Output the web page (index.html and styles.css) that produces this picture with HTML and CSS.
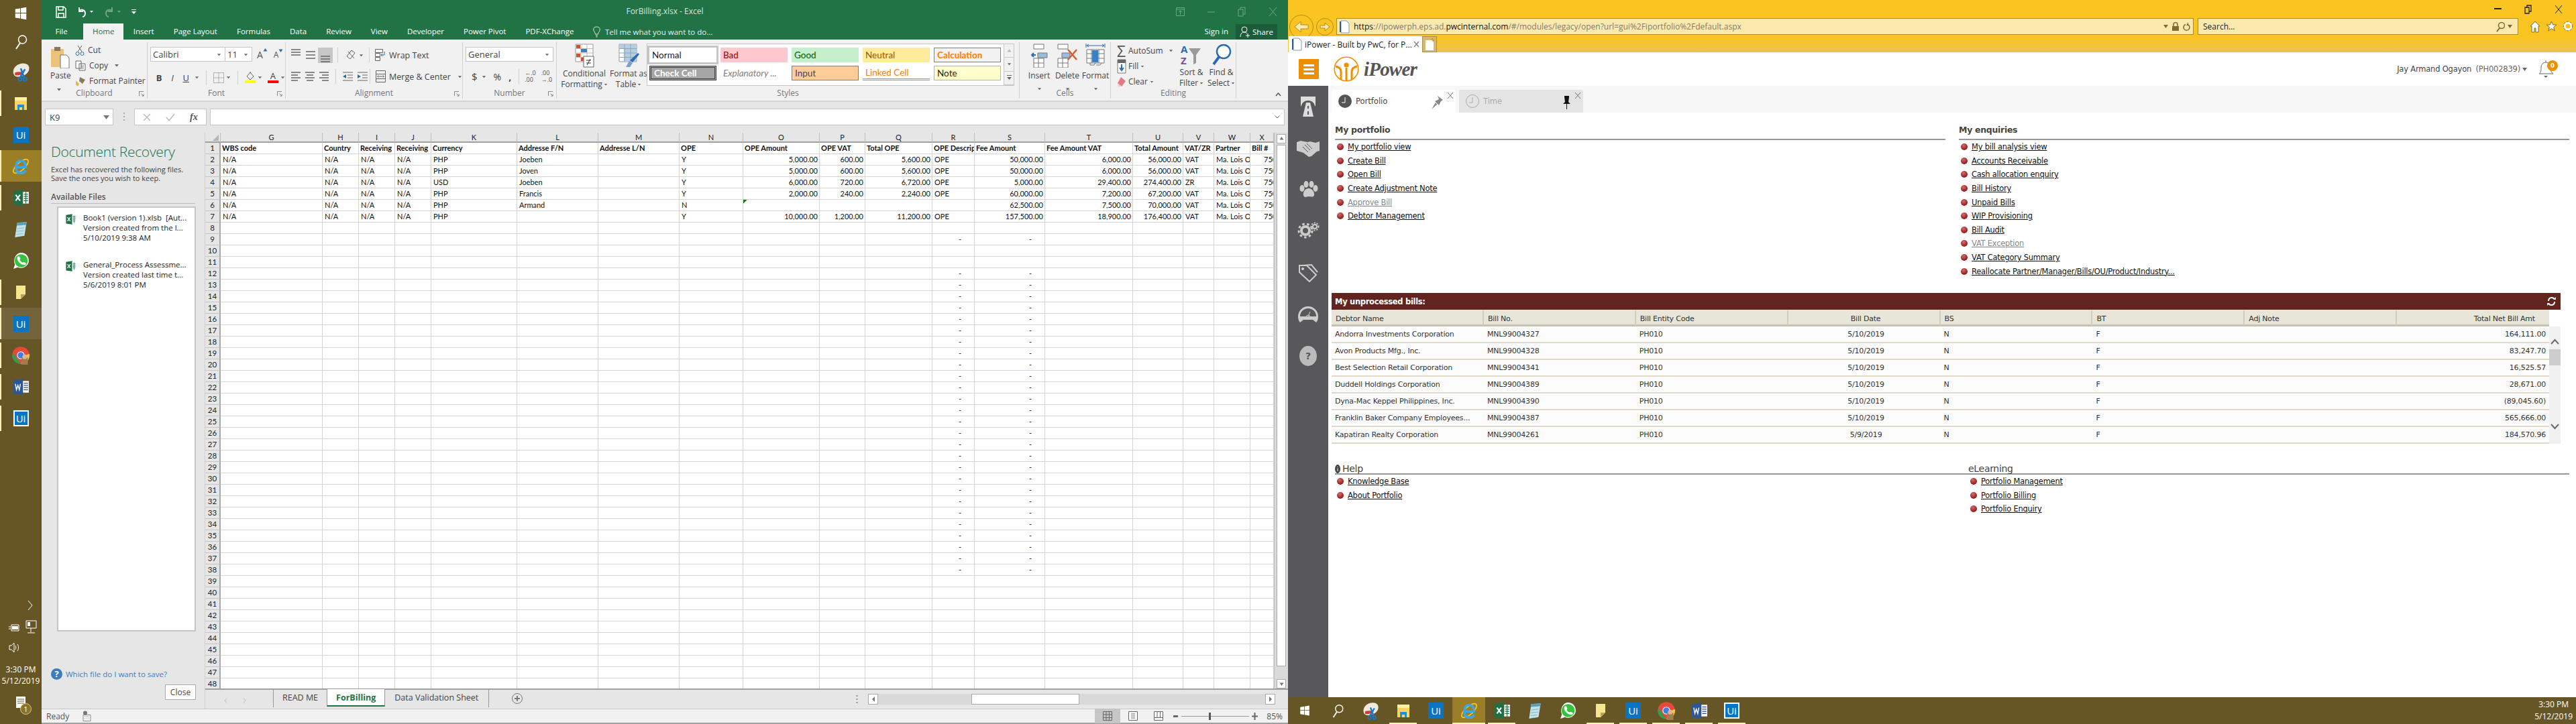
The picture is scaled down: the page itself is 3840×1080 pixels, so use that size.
FILE: index.html
```html
<!DOCTYPE html>
<html lang="en">
<head>
<meta charset="utf-8">
<title>ForBilling.xlsx - Excel and iPower</title>
<link rel="stylesheet" href="styles.css">
</head>
<body>
<svg class="sprite" width="0" height="0" aria-hidden="true">
<symbol id="win" viewBox="0 0 24 24"><path fill="#fff" d="M3 5l8-1.2V11H3zM12 3.600L21 2v9h-9zM3 12h8v8.200L3 19zM12 12h9v10l-9-1.600z"/></symbol>
<symbol id="find" viewBox="0 0 24 24"><circle cx="14.500" cy="9" r="6" fill="none" stroke="#fff" stroke-width="1.500"/><path d="M11 14L5 23" stroke="#fff" stroke-width="2"/></symbol>
<symbol id="snip" viewBox="0 0 24 24"><path fill="#efe9df" d="M3 12C3 6 9 2 15 2c5 0 7 3 7 6 0 6-7 10-13 10-4 0-6-2-6-6z"/><path fill="#cf3e37" d="M5 13c3-1 8-1 11 0-3 3-8 4-11 3z"/><path stroke="#1b78c9" stroke-width="2" fill="none" d="M12 8l4 11M17 9l-6 10"/><circle cx="11" cy="21" r="2" fill="none" stroke="#1b78c9" stroke-width="1.500"/><circle cx="17" cy="21" r="2" fill="none" stroke="#1b78c9" stroke-width="1.500"/></symbol>
<symbol id="folder" viewBox="0 0 24 24"><path fill="#fbd65e" d="M3 3h18v19H3z"/><path fill="#fdf0a6" d="M3 3h18v5H3z"/><path fill="#1f8fd6" d="M7 14h10v8h-3v-4h-4v4H7z"/></symbol>
<symbol id="xl" viewBox="0 0 24 24"><path fill="#1e7145" d="M2 3l13-2v22L2 21z"/><path fill="#fff" d="M15 4h8v16h-8z"/><path stroke="#1e7145" stroke-width="1" d="M16 7h6M16 10h6M16 13h6M16 16h6M19 4v16"/><path stroke="#fff" stroke-width="2" d="M5 8l6 8M11 8l-6 8"/></symbol>
<symbol id="ie" viewBox="0 0 24 24"><ellipse cx="12" cy="12" rx="12" ry="5" transform="rotate(-42 12 12)" fill="none" stroke="#f4c430" stroke-width="1.500"/><path d="M6 13h12c0-5-2-8-6-8s-6 3-6 8 2 8 6 8c3 0 5-1 6-4" fill="none" stroke="#3aa7e8" stroke-width="3"/></symbol>
<symbol id="pad" viewBox="0 0 24 24"><path fill="#bfe3e8" d="M7 3l13-1-3 19-13 2z"/><path fill="#5c9fb6" d="M7 3l13-1-.6 4L6.300 7z"/><path stroke="#8fbac8" stroke-width="1" d="M7 11l10-1M6 15l10-1M6 19l9-1"/></symbol>
<symbol id="wa" viewBox="0 0 24 24"><path fill="#fff" d="M2 23l2-6C1 11 5 1 12.500 1 19 1 23 6 23 12c0 7-8 12-15 9z"/><circle cx="12.500" cy="12" r="9" fill="#35c23f"/><path fill="#fff" d="M8 6l2 0 1.500 3-1 1.500c.7 1.800 2 3 4 4l1.500-1 3 1.500v2c-3 2-6 0-9-2.500C7.500 12 6 8.500 8 6z"/></symbol>
<symbol id="sticky" viewBox="0 0 24 24"><path fill="#f7e58f" d="M5 2h14v13l-7 7H5z"/><path fill="#b7a35a" d="M19 15l-7 7v-7z"/></symbol>
<symbol id="chrome" viewBox="0 0 24 24"><circle cx="12" cy="12" r="11" fill="#e8483b"/><path fill="#2f9e4f" d="M2 9l10 14c-6 0-11-5-11-11z"/><path fill="#f5c53a" d="M23 10a11 11 0 0 1-11 13l6-11z"/><circle cx="12" cy="12" r="5" fill="#fff"/><circle cx="12" cy="12" r="4" fill="#3f7fe0"/><path fill="#a37c4e" d="M13 15h8v9h-8z"/><circle cx="17" cy="14" r="3" fill="#e0b48c"/></symbol>
<symbol id="word" viewBox="0 0 24 24"><path fill="#2b579a" d="M2 3l13-2v22L2 21z"/><path fill="#fff" d="M15 4h8v16h-8z"/><path stroke="#2b579a" stroke-width="1" d="M16 7h6M16 10h6M16 13h6M16 16h6"/><path stroke="#fff" stroke-width="1.300" fill="none" d="M4.500 8l1.500 8 2-6 2 6 1.500-8"/></symbol>
<symbol id="dn" viewBox="0 0 8 5"><path fill="#666" d="M1 1h6L4 4.500z"/></symbol>
<symbol id="launch" viewBox="0 0 9 9"><path fill="none" stroke="#777" d="M.5 8V.5H8M4 4l4 4M8 5v3H5"/></symbol>
<symbol id="lines" viewBox="0 0 16 14"><path stroke="#666" stroke-width="1.300" d="M1 2h14M1 7h14M1 12h14"/></symbol>
<symbol id="linesl" viewBox="0 0 16 14"><path stroke="#666" stroke-width="1.300" d="M1 1h14M1 5h10M1 9h14M1 13h10"/></symbol>
<symbol id="linesc" viewBox="0 0 16 14"><path stroke="#666" stroke-width="1.300" d="M1 1h14M3 5h10M1 9h14M3 13h10"/></symbol>
<symbol id="linesr" viewBox="0 0 16 14"><path stroke="#666" stroke-width="1.300" d="M1 1h14M5 5h10M1 9h14M5 13h10"/></symbol>
<symbol id="page" viewBox="0 0 16 20"><path fill="#fff" stroke="#89a" d="M3 1h8l4 4v14H3z"/><path fill="#2b579a" d="M1 2h2v16H1z"/></symbol>
</svg>

<nav class="vbar">
  <div class="vitem v-win"><svg width="22" height="22"><use href="#win"/></svg></div>
  <div class="vitem v-find"><svg width="24" height="24"><use href="#find"/></svg></div>
  <div class="vitem v-slot"><svg width="30" height="30"><use href="#snip"/></svg></div>
  <div class="vitem v-slot on"><svg width="24" height="28"><use href="#folder"/></svg></div>
  <div class="vitem v-slot"><span class="ui">Ui</span></div>
  <div class="vitem v-slot on active"><svg width="28" height="30"><use href="#ie"/></svg></div>
  <div class="vitem v-slot on"><svg width="26" height="26"><use href="#xl"/></svg></div>
  <div class="vitem v-slot"><svg width="26" height="30"><use href="#pad"/></svg></div>
  <div class="vitem v-slot"><svg width="26" height="28"><use href="#wa"/></svg></div>
  <div class="vitem v-slot on"><svg width="24" height="28"><use href="#sticky"/></svg></div>
  <div class="vitem v-slot on hover"><span class="ui">Ui</span></div>
  <div class="vitem v-slot on"><svg width="28" height="30"><use href="#chrome"/></svg></div>
  <div class="vitem v-slot on"><svg width="26" height="26"><use href="#word"/></svg></div>
  <div class="vitem v-slot on"><span class="ui ui-w">Ui</span></div>
  <div class="vspace"></div>
  <div class="vchev"><svg width="9" height="16"><path d="M1 1l6 7-6 7" fill="none" stroke="#fff"/></svg></div>
  <div class="vtray">
    <svg width="17" height="18"><path fill="none" stroke="#fff" d="M5 5h11v9H5zM1 8h3M1 11h3"/><rect x="6" y="7" width="9" height="5" fill="#fff"/></svg>
    <svg width="17" height="22"><path fill="none" stroke="#fff" d="M1 1h15v11H1zM8 12v6M3 19h11"/><rect x="3" y="3" width="4" height="6" fill="#fff"/></svg>
  </div>
  <div class="vvol"><svg width="18" height="16"><path fill="none" stroke="#fff" d="M1 5h3l4-4v14l-4-4H1zM10 5c1 2 1 4 0 6M13 3c2 3 2 7 0 10"/></svg></div>
  <div class="vclock">3:30 PM<br>5/12/2019</div>
  <div class="vnote"><svg width="18" height="20"><path fill="#fff" d="M1 1h14v17H1z"/><path stroke="#66562a" d="M3 5h10M3 8h10M3 11h10"/></svg><span class="vbadge">1</span></div>
</nav>

<main class="excel">
  <header class="xtitle">
    <div class="qat">
      <svg width="16" height="18"><path fill="none" stroke="#fff" stroke-width="1.500" d="M1 1h11l3 3v13H1zM4 1v5h7V1M4 17v-6h8v6"/></svg>
      <svg width="16" height="16"><path fill="none" stroke="#fff" stroke-width="2" d="M4 1v6h6M4 6c4-3 9-1 9 4 0 3-2 5-4 5"/></svg>
      <svg class="cd" width="7" height="5"><path fill="#fff" d="M1 1h5L3.500 4z"/></svg>
      <svg width="16" height="16"><path fill="none" stroke="#6fa588" stroke-width="2" d="M12 1v6H6M12 6C8 3 3 5 3 10c0 3 2 5 4 5"/></svg>
      <svg class="cd" width="7" height="5"><path fill="#6fa588" d="M1 1h5L3.500 4z"/></svg>
      <svg width="7" height="8"><path fill="#fff" d="M0 0h7v1H0zM0 3h7L3.500 7z"/></svg>
    </div>
    <div class="xname">ForBilling.xlsx - Excel</div>
    <div class="xwin">
      <svg width="13" height="13"><path fill="none" stroke="#6fa588" d="M.5.500h12v12H.5zM.5 3h12M6.500 5v6M4 7l2.500-2L9 7"/></svg>
      <svg width="11" height="11"><path stroke="#6fa588" d="M0 6h11"/></svg>
      <svg width="12" height="15"><path fill="none" stroke="#6fa588" d="M1 4h7v10H1zM4 4V1h7v10H8"/></svg>
      <svg width="13" height="15"><path stroke="#6fa588" d="M1 1l11 13M12 1L1 14"/></svg>
    </div>
  </header>
  <div class="xtabs">
    <span class="xt first">File</span><span class="xt home">Home</span><span class="xt">Insert</span><span class="xt">Page Layout</span><span class="xt">Formulas</span><span class="xt">Data</span><span class="xt">Review</span><span class="xt">View</span><span class="xt">Developer</span><span class="xt">Power Pivot</span><span class="xt">PDF-XChange</span>
    <span class="xtell"><svg width="11" height="17"><path fill="none" stroke="#d7e8de" d="M5.500 1C2 1 .7 3 .7 5c0 3 2.300 3.500 2.800 7h4C8 8.500 10.300 8 10.300 5c0-2-1.300-4-4.800-4zM4 14h3M4.500 16h2"/></svg>Tell me what you want to do...</span>
    <span class="xsign">Sign in</span>
    <span class="xshare"><svg width="15" height="17"><circle cx="7" cy="5" r="4" fill="none" stroke="#fff"/><path fill="none" stroke="#fff" d="M1 16c0-4 2-7 6-7 2 0 3 1 4 2M9 14h6M12 11v6"/></svg>Share</span>
  </div>

  <section class="ribbon">
    <div class="grp g-clip">
      <div class="gb clip">
        <div class="paste">
          <svg width="30" height="34"><path fill="#e9c47a" d="M1 5h19v27H1z"/><path fill="#8a7a5c" d="M6 2h9v6H6z"/><path fill="#fff" stroke="#777" d="M15 14h9l4 4v16H15z"/></svg>
          <span>Paste</span>
          <svg class="pdn" width="8" height="5"><use href="#dn"/></svg>
        </div>
        <div class="clipcol">
          <div class="cr"><svg width="14" height="16"><path fill="none" stroke="#666" d="M4 1l6 9M10 1L4 10"/><circle cx="3.500" cy="13" r="2.500" fill="none" stroke="#2b6cb0"/><circle cx="10.500" cy="13" r="2.500" fill="none" stroke="#2b6cb0"/></svg><span>Cut</span></div>
          <div class="cr"><svg width="16" height="16"><path fill="#fff" stroke="#666" d="M1 1h8v11H1zM6 5h9v10H6z"/><path stroke="#888" d="M8 8h5M8 10h5M8 12h5"/></svg><span>Copy</span><svg class="ml8" width="8" height="5"><use href="#dn"/></svg></div>
          <div class="cr"><svg width="16" height="18"><path fill="#e9b44c" d="M1 8l5 5-2 4-3-3z"/><path fill="#8a7a5c" d="M7 3l8 4-4 6-5-4z"/></svg><span>Format Painter</span></div>
        </div>
      </div>
      <div class="gl">Clipboard<svg class="lau" width="8" height="8"><use href="#launch"/></svg></div>
    </div>
    <div class="grp g-font">
      <div class="gb">
        <div class="fr1">
          <div class="combo c-font"><span>Calibri</span><svg width="7" height="5"><use href="#dn"/></svg></div>
          <div class="combo c-size"><span>11</span><svg width="7" height="5"><use href="#dn"/></svg></div>
          <span class="bigA">A<svg width="7" height="5"><path fill="#2b6cb0" d="M.5 4.500L3.500 0l3 4.500z"/></svg></span>
          <span class="smA">A<svg width="7" height="5"><path fill="#2b6cb0" d="M.5.500L3.500 5l3-4.500z"/></svg></span>
        </div>
        <div class="fr2">
          <b class="fb">B</b><i class="fi">I</i><u class="fu">U</u><svg class="m1" width="7" height="5"><use href="#dn"/></svg>
          <span class="sep"></span>
          <svg width="16" height="16"><path fill="none" stroke="#777" stroke-dasharray="1 1" d="M.5.500h15v15H.5zM.5 8h15M8 .5v15"/></svg><svg class="m1" width="7" height="5"><use href="#dn"/></svg>
          <span class="sep"></span>
          <span class="swatch"><svg width="15" height="13"><path fill="none" stroke="#666" d="M3 7l5-6 5 6-5 5zM8 1V0"/></svg><em class="sw-y"></em></span><svg class="m1" width="7" height="5"><use href="#dn"/></svg>
          <span class="swatch sw2"><span class="swA">A</span><em class="sw-r"></em></span><svg class="m1" width="7" height="5"><use href="#dn"/></svg>
        </div>
      </div>
      <div class="gl">Font<svg class="lau" width="8" height="8"><use href="#launch"/></svg></div>
    </div>
    <div class="grp g-align">
      <div class="gb">
        <div class="ar ar1">
          <span class="ab top"><svg width="16" height="14"><path stroke="#666" stroke-width="1.300" d="M1 1h14M1 5h14M1 9h14"/></svg></span>
          <span class="ab"><svg width="16" height="14"><use href="#lines"/></svg></span>
          <span class="ab sel"><svg width="16" height="14"><path stroke="#666" stroke-width="1.300" d="M1 5h14M1 9h14M1 13h14"/></svg></span>
          <span class="vs"></span>
          <svg class="ori" width="18" height="18"><path fill="none" stroke="#666" d="M3 11l7-9 5 4-7 9zM5 4l9 10"/></svg><svg class="m1" width="7" height="5"><use href="#dn"/></svg>
          <span class="vs vs2"></span>
          <svg class="wr" width="16" height="18"><path fill="none" stroke="#666" d="M.5.500h11v5H.5zM.5 6.500h7v5h-7zM.5 12.500h7v5h-7z"/><path fill="none" stroke="#2b6cb0" d="M14 4v5h-4M11 7l-2 2 2 2"/></svg>
          <span class="tx">Wrap Text</span>
        </div>
        <div class="ar">
          <span class="ab"><svg width="16" height="14"><use href="#linesl"/></svg></span>
          <span class="ab"><svg width="16" height="14"><use href="#linesc"/></svg></span>
          <span class="ab"><svg width="16" height="14"><use href="#linesr"/></svg></span>
          <span class="vs"></span>
          <svg class="ind" width="16" height="15"><path stroke="#666" d="M1 1h15M8 5h8M8 9h8M1 13h15"/><path fill="#2b6cb0" d="M6 4v6L1 7z"/></svg>
          <svg class="ind2" width="16" height="15"><path stroke="#666" d="M1 1h15M8 5h8M8 9h8M1 13h15"/><path fill="#2b6cb0" d="M1 4v6l5-3z"/></svg>
          <span class="vs vs3"></span>
          <svg class="wr" width="15" height="18"><path fill="none" stroke="#666" d="M.5.500h14v17H.5zM.5 5.500h14M.5 12.500h14"/><path fill="none" stroke="#666" d="M3 9h9M4 7.500L2.500 9 4 10.500M11 7.500L12.500 9 11 10.500"/></svg>
          <span class="tx">Merge &amp; Center</span><svg class="ml12" width="7" height="5"><use href="#dn"/></svg>
        </div>
      </div>
      <div class="gl">Alignment<svg class="lau" width="8" height="8"><use href="#launch"/></svg></div>
    </div>
    <div class="grp g-num">
      <div class="gb">
        <div class="combo c-gen"><span>General</span><svg width="7" height="5"><use href="#dn"/></svg></div>
        <div class="nr">
          <span class="dol">$</span><svg width="7" height="5"><use href="#dn"/></svg>
          <span class="pct">%</span><span class="com">,</span>
          <span class="vs"></span>
          <span class="dec"><small>←.0</small><small>.00</small></span>
          <span class="dec"><small>.00</small><small>→.0</small></span>
        </div>
      </div>
      <div class="gl">Number<svg class="lau" width="8" height="8"><use href="#launch"/></svg></div>
    </div>
    <div class="grp g-styles">
      <div class="gb stylesb">
        <div class="big bcf">
          <svg width="30" height="36"><path fill="#fff" stroke="#999" d="M2 1h26v26H2z"/><path stroke="#bbb" d="M2 7.500h26M2 14h26M2 20.500h26M10 1v26M19 1v26"/><path fill="#d1502e" d="M3 2h6v5H3zM3 15h6v5H3zM10 21h9v5h-9z"/><path fill="#4a7db8" d="M10 8h9v5h-9z"/><path fill="#fff" stroke="#666" d="M14 19h15v16H14z"/><path stroke="#333" d="M18 25h7M18 29h7M24 23l-5 9"/></svg>
          <span>Conditional</span><span>Formatting<svg width="6" height="4"><use href="#dn"/></svg></span>
        </div>
        <div class="big bft">
          <svg width="32" height="36"><path fill="#fff" stroke="#999" d="M2 1h26v26H2z"/><path fill="#b7cbe4" d="M2 1h26v6H2zM9 7h19v20H9z"/><path stroke="#8aa" d="M2 7.500h26M2 14h26M2 20.500h26M10 1v26M19 1v26"/><path fill="#2b6cb0" d="M30 14l2 2-10 12-4-3z"/><path fill="#7aa0d0" d="M17 26l5 3-4 6-6 0z"/></svg>
          <span>Format as</span><span>Table<svg width="6" height="4"><use href="#dn"/></svg></span>
        </div>
        <div class="gal">
          <div class="galgrid">
            <span class="st st-n">Normal</span><span class="st st-b">Bad</span><span class="st st-g">Good</span><span class="st st-u">Neutral</span><span class="st st-c">Calculation</span>
            <span class="st st-k">Check Cell</span><span class="st st-e">Explanatory ...</span><span class="st st-i">Input</span><span class="st st-l">Linked Cell</span><span class="st st-o">Note</span>
          </div>
          <div class="galbtns"><span><svg width="7" height="5"><path fill="#bbb" d="M.5 4.500L3.500 0l3 4.500z"/></svg></span><span><svg width="7" height="5"><use href="#dn"/></svg></span><span><svg width="7" height="8"><path fill="#666" d="M0 0h7v1H0zM0 3h7L3.500 7z"/></svg></span></div>
        </div>
      </div>
      <div class="gl">Styles</div>
    </div>
    <div class="grp g-cells">
      <div class="gb cellsb">
        <div class="cb"><svg width="28" height="36"><path fill="#fff" stroke="#777" d="M6 1h15v7H6zM6 22h15v14H6zM13 22v14M6 29h15"/><path fill="#9cbcde" stroke="#777" d="M12 14h14v7H12z"/><path fill="none" stroke="#2b6cb0" stroke-width="2" d="M9 17H3M6 14l-3 3 3 3"/></svg><span>Insert</span><svg width="7" height="5"><use href="#dn"/></svg></div>
        <div class="cb"><svg width="32" height="36"><path fill="#fff" stroke="#777" d="M2 1h15v7H2zM2 22h15v14H2zM9 22v14M2 29h15"/><path fill="#9cbcde" stroke="#777" d="M8 14h12v7H8z"/><path stroke="#e2572b" stroke-width="2.500" d="M17 9l13 15M30 9L17 24"/></svg><span>Delete</span><svg width="7" height="5"><use href="#dn"/></svg></div>
        <div class="cb"><svg width="30" height="36"><path fill="none" stroke="#2b6cb0" d="M2 3h26M2 3l3-2M2 3l3 2M28 3l-3-2M28 3l-3 2M1 0v6M29 0v6"/><path fill="#fff" stroke="#777" d="M2 9h26v20H2zM2 15h26M2 22h26M9 9v20M20 9v20"/><path fill="#3b7fc4" d="M10 10h9v18H10z"/><path fill="none" stroke="#777" d="M7 29v3h6l2-3M16 32h6l2-3"/></svg><span>Format</span><svg width="7" height="5"><use href="#dn"/></svg></div>
      </div>
      <div class="gl">Cells</div>
    </div>
    <div class="grp g-edit">
      <div class="gb editb">
        <div class="edcol">
          <div class="er"><span class="sig">Σ</span><span>AutoSum</span><svg class="ml5" width="7" height="5"><use href="#dn"/></svg></div>
          <div class="er"><svg width="14" height="22"><path fill="#fff" stroke="#777" d="M1 1h12v20H1z"/><path fill="#666" d="M1 1h12v5H1z"/><path stroke="#2b6cb0" stroke-width="2" fill="none" d="M7 8v9M4 13l3 4 3-4"/></svg><span>Fill</span><svg class="ml2" width="6" height="4"><use href="#dn"/></svg></div>
          <div class="er"><svg width="14" height="18"><path fill="#e37a8a" d="M6 2l7 6-6 8-6-5z"/><path fill="#f6c5cc" d="M1 11l6 5H2z"/></svg><span>Clear</span><svg class="ml2" width="6" height="4"><use href="#dn"/></svg></div>
        </div>
        <div class="big bsort"><svg width="32" height="34"><text x="0" y="14" class="az az1">A</text><text x="0" y="31" class="az az2">Z</text><path fill="#9a9a9a" d="M12 7h18l-7 10v12l-4 2V17z"/></svg><span>Sort &amp;</span><span>Filter<svg width="6" height="4"><use href="#dn"/></svg></span></div>
        <div class="big bfind"><svg width="30" height="34"><circle cx="18" cy="12" r="10" fill="#fff" stroke="#2b6cb0" stroke-width="2.500"/><path stroke="#2b6cb0" stroke-width="4" d="M11 20L3 31"/></svg><span>Find &amp;</span><span>Select<svg width="6" height="4"><use href="#dn"/></svg></span></div>
      </div>
      <div class="gl">Editing</div>
    </div>
    <div class="rcollapse"><svg width="9" height="6"><path fill="none" stroke="#555" stroke-width="1.500" d="M1 5l3.500-4L8 5"/></svg></div>
  </section>

  <div class="fbar">
    <div class="namebox"><span>K9</span><svg width="9" height="6"><path fill="#777" d="M0 0h9L4.500 6z"/></svg></div>
    <div class="dots"></div>
    <div class="fxbox">
      <svg width="12" height="12"><path stroke="#bbb" stroke-width="1.500" d="M1 1l10 10M11 1L1 11"/></svg>
      <svg width="14" height="12"><path fill="none" stroke="#bbb" stroke-width="1.500" d="M1 6l4 5L13 1"/></svg>
      <span class="fx">fx</span>
    </div>
    <div class="finput"><svg width="8" height="5"><path fill="none" stroke="#666" d="M.5.500L4 4l3.500-3.500"/></svg></div>
  </div>

  <div class="xbody">
    <aside class="recover">
      <h2>Document Recovery</h2>
      <p>Excel has recovered the following files.<br>Save the ones you wish to keep.</p>
      <h3>Available Files</h3>
      <div class="files">
        <div class="file"><svg width="17" height="20"><use href="#xl"/></svg><div>Book1 (version 1).xlsb&nbsp; [Aut...<br>Version created from the l...<br>5/10/2019 9:38 AM</div></div>
        <div class="file"><svg width="17" height="20"><use href="#xl"/></svg><div>General_Process Assessme...<br>Version created last time t...<br>5/6/2019 8:01 PM</div></div>
      </div>
      <a class="which"><svg width="17" height="17"><circle cx="8.500" cy="8.500" r="8.500" fill="#3f7cbf"/><text x="8.500" y="13" class="qm">?</text></svg>Which file do I want to save?</a>
      <div class="closewrap"><span class="closebtn">Close</span></div>
    </aside>
    <div class="sheetcol">
      <div class="sheetmain">
        <div class="gridwrap">
          <table class="grid">
            <colgroup><col class="c-rh"><col class="c-g"><col class="c-h"><col class="c-i"><col class="c-j"><col class="c-k"><col class="c-l"><col class="c-m"><col class="c-n"><col class="c-o"><col class="c-p"><col class="c-q"><col class="c-r"><col class="c-s"><col class="c-t"><col class="c-u"><col class="c-v"><col class="c-w"><col class="c-x"></colgroup>
            <thead><tr class="colh"><th class="corner"><svg width="9" height="9"><path fill="#b5b5b5" d="M9 0v9H0z"/></svg><th>G<th>H<th>I<th>J<th>K<th>L<th>M<th>N<th>O<th>P<th>Q<th>R<th>S<th>T<th>U<th>V<th>W<th>X</thead>
            <tbody>
            <tr class="r1"><th>1<td class="h">WBS code<td class="h">Country<td class="h">Receiving<td class="h">Receiving<td class="h">Currency<td class="h">Addresse F/N<td class="h">Addresse L/N<td class="h">OPE<td class="h">OPE Amount<td class="h">OPE VAT<td class="h">Total OPE<td class="h">OPE Descrip<td class="h">Fee Amount<td class="h">Fee Amount VAT<td class="h">Total Amount<td class="h">VAT/ZR<td class="h">Partner<td class="h">Bill #
            <tr><th>2<td>N/A<td>N/A<td>N/A<td>N/A<td>PHP<td>Joeben<td><td>Y<td class="n">5,000.00<td class="n">600.00<td class="n">5,600.00<td>OPE<td class="n">50,000.00<td class="n">6,000.00<td class="n">56,000.00<td>VAT<td>Ma. Lois Ong<td class="bn">7500
            <tr><th>3<td>N/A<td>N/A<td>N/A<td>N/A<td>PHP<td>Joven<td><td>Y<td class="n">5,000.00<td class="n">600.00<td class="n">5,600.00<td>OPE<td class="n">50,000.00<td class="n">6,000.00<td class="n">56,000.00<td>VAT<td>Ma. Lois Ong<td class="bn">7500
            <tr><th>4<td>N/A<td>N/A<td>N/A<td>N/A<td>USD<td>Joeben<td><td>Y<td class="n">6,000.00<td class="n">720.00<td class="n">6,720.00<td>OPE<td class="n">5,000.00<td class="n">29,400.00<td class="n">274,400.00<td>ZR<td>Ma. Lois Ong<td class="bn">7500
            <tr><th>5<td>N/A<td>N/A<td>N/A<td>N/A<td>PHP<td>Francis<td><td>Y<td class="n">2,000.00<td class="n">240.00<td class="n">2,240.00<td>OPE<td class="n">60,000.00<td class="n">7,200.00<td class="n">67,200.00<td>VAT<td>Ma. Lois Ong<td class="bn">7500
            <tr><th>6<td>N/A<td>N/A<td>N/A<td>N/A<td>PHP<td>Armand<td><td>N<td class="tri"><td><td><td><td class="n">62,500.00<td class="n">7,500.00<td class="n">70,000.00<td>VAT<td>Ma. Lois Ong<td class="bn">7500
            <tr><th>7<td>N/A<td>N/A<td>N/A<td>N/A<td>PHP<td><td><td>Y<td class="n">10,000.00<td class="n">1,200.00<td class="n">11,200.00<td>OPE<td class="n">157,500.00<td class="n">18,900.00<td class="n">176,400.00<td>VAT<td>Ma. Lois Ong<td class="bn">7500
            <tr><th>8<td><td><td><td><td><td><td><td><td><td><td><td><td><td><td><td><td><td>
            <tr><th>9<td><td><td><td><td><td><td><td><td><td><td><td class="d">-<td class="d">-<td><td><td><td><td>
            <tr><th>10<td><td><td><td><td><td><td><td><td><td><td><td><td><td><td><td><td><td>
            <tr><th>11<td><td><td><td><td><td><td><td><td><td><td><td><td><td><td><td><td><td>
            <tr><th>12<td><td><td><td><td><td><td><td><td><td><td><td class="d">-<td class="d">-<td><td><td><td><td>
            <tr><th>13<td><td><td><td><td><td><td><td><td><td><td><td class="d">-<td class="d">-<td><td><td><td><td>
            <tr><th>14<td><td><td><td><td><td><td><td><td><td><td><td class="d">-<td class="d">-<td><td><td><td><td>
            <tr><th>15<td><td><td><td><td><td><td><td><td><td><td><td class="d">-<td class="d">-<td><td><td><td><td>
            <tr><th>16<td><td><td><td><td><td><td><td><td><td><td><td class="d">-<td class="d">-<td><td><td><td><td>
            <tr><th>17<td><td><td><td><td><td><td><td><td><td><td><td class="d">-<td class="d">-<td><td><td><td><td>
            <tr><th>18<td><td><td><td><td><td><td><td><td><td><td><td class="d">-<td class="d">-<td><td><td><td><td>
            <tr><th>19<td><td><td><td><td><td><td><td><td><td><td><td class="d">-<td class="d">-<td><td><td><td><td>
            <tr><th>20<td><td><td><td><td><td><td><td><td><td><td><td class="d">-<td class="d">-<td><td><td><td><td>
            <tr><th>21<td><td><td><td><td><td><td><td><td><td><td><td class="d">-<td class="d">-<td><td><td><td><td>
            <tr><th>22<td><td><td><td><td><td><td><td><td><td><td><td class="d">-<td class="d">-<td><td><td><td><td>
            <tr><th>23<td><td><td><td><td><td><td><td><td><td><td><td class="d">-<td class="d">-<td><td><td><td><td>
            <tr><th>24<td><td><td><td><td><td><td><td><td><td><td><td class="d">-<td class="d">-<td><td><td><td><td>
            <tr><th>25<td><td><td><td><td><td><td><td><td><td><td><td class="d">-<td class="d">-<td><td><td><td><td>
            <tr><th>26<td><td><td><td><td><td><td><td><td><td><td><td class="d">-<td class="d">-<td><td><td><td><td>
            <tr><th>27<td><td><td><td><td><td><td><td><td><td><td><td class="d">-<td class="d">-<td><td><td><td><td>
            <tr><th>28<td><td><td><td><td><td><td><td><td><td><td><td class="d">-<td class="d">-<td><td><td><td><td>
            <tr><th>29<td><td><td><td><td><td><td><td><td><td><td><td class="d">-<td class="d">-<td><td><td><td><td>
            <tr><th>30<td><td><td><td><td><td><td><td><td><td><td><td class="d">-<td class="d">-<td><td><td><td><td>
            <tr><th>31<td><td><td><td><td><td><td><td><td><td><td><td class="d">-<td class="d">-<td><td><td><td><td>
            <tr><th>32<td><td><td><td><td><td><td><td><td><td><td><td class="d">-<td class="d">-<td><td><td><td><td>
            <tr><th>33<td><td><td><td><td><td><td><td><td><td><td><td class="d">-<td class="d">-<td><td><td><td><td>
            <tr><th>34<td><td><td><td><td><td><td><td><td><td><td><td class="d">-<td class="d">-<td><td><td><td><td>
            <tr><th>35<td><td><td><td><td><td><td><td><td><td><td><td class="d">-<td class="d">-<td><td><td><td><td>
            <tr><th>36<td><td><td><td><td><td><td><td><td><td><td><td class="d">-<td class="d">-<td><td><td><td><td>
            <tr><th>37<td><td><td><td><td><td><td><td><td><td><td><td class="d">-<td class="d">-<td><td><td><td><td>
            <tr><th>38<td><td><td><td><td><td><td><td><td><td><td><td class="d">-<td class="d">-<td><td><td><td><td>
            <tr><th>39<td><td><td><td><td><td><td><td><td><td><td><td><td><td><td><td><td><td>
            <tr><th>40<td><td><td><td><td><td><td><td><td><td><td><td><td><td><td><td><td><td>
            <tr><th>41<td><td><td><td><td><td><td><td><td><td><td><td><td><td><td><td><td><td>
            <tr><th>42<td><td><td><td><td><td><td><td><td><td><td><td><td><td><td><td><td><td>
            <tr><th>43<td><td><td><td><td><td><td><td><td><td><td><td><td><td><td><td><td><td>
            <tr><th>44<td><td><td><td><td><td><td><td><td><td><td><td><td><td><td><td><td><td>
            <tr><th>45<td><td><td><td><td><td><td><td><td><td><td><td><td><td><td><td><td><td>
            <tr><th>46<td><td><td><td><td><td><td><td><td><td><td><td><td><td><td><td><td><td>
            <tr><th>47<td><td><td><td><td><td><td><td><td><td><td><td><td><td><td><td><td><td>
            <tr><th>48<td><td><td><td><td><td><td><td><td><td><td><td><td><td><td><td><td><td>
            </tbody>
          </table>
        </div>
        <div class="vscroll">
          <span class="sbtn"><svg width="7" height="5"><path fill="#777" d="M.5 4.500L3.500 0l3 4.500z"/></svg></span>
          <span class="sthumb"></span>
          <span class="sbtn"><svg width="7" height="5"><path fill="#777" d="M.5.500L3.500 5l3-4.500z"/></svg></span>
        </div>
      </div>
      <div class="sheettabs">
        <div class="tnav"><svg width="5" height="8"><path fill="none" stroke="#bbb" d="M4 .5L1 4l3 3.500"/></svg><svg width="5" height="8"><path fill="none" stroke="#bbb" d="M1 .5L4 4 1 7.500"/></svg></div>
        <span class="stab">READ ME</span><span class="stab active">ForBilling</span><span class="stab last">Data Validation Sheet</span>
        <svg class="addsheet" width="16" height="16"><circle cx="8" cy="8" r="7.500" fill="none" stroke="#777"/><path stroke="#777" stroke-width="2" d="M4 8h8M8 4v8"/></svg>
        <div class="hdots"></div>
        <div class="hscroll"><span class="hb"><svg width="4" height="8"><path fill="#777" d="M4 0v8L0 4z"/></svg></span><span class="hspace1"></span><span class="hthumb"></span><span class="hspace2"></span><span class="hb"><svg width="4" height="8"><path fill="#777" d="M0 0v8l4-4z"/></svg></span></div>
      </div>
    </div>
  </div>
  <footer class="xstatus">
    <span class="ready">Ready</span>
    <svg width="13" height="16"><circle cx="4" cy="3.500" r="3" fill="#777"/><path fill="#fff" stroke="#888" d="M1 6.500h11v9H1z"/><path stroke="#888" stroke-dasharray="1.500 1.500" d="M3 9h7M3 12h7"/></svg>
    <div class="zoomarea">
      <span class="vbtn sel"><svg width="14" height="14"><path fill="none" stroke="#666" d="M.5.500h13v13H.5zM5 .5v13M9.500.500v13M.5 5h13M.5 9.500h13"/></svg></span>
      <span class="vbtn"><svg width="14" height="14"><path fill="#fff" stroke="#666" d="M.5.500h13v13H.5z"/><path stroke="#666" d="M4 4h6M4 7h6M4 10h6"/></svg></span>
      <span class="vbtn"><svg width="14" height="14"><path fill="#fff" stroke="#666" d="M.5.500h13v13H.5z"/><path stroke="#666" d="M.5 9.500h13M5 .5v9M9.500.500v9"/></svg></span>
      <svg class="zm" width="7" height="3"><path fill="#666" d="M0 0h7v3H0z"/></svg>
      <span class="slider"><em></em></span>
      <svg class="zp" width="9" height="11"><path stroke="#666" stroke-width="2" d="M0 5.500h9M4.500 0v11"/></svg>
      <span class="pctz">85%</span>
    </div>
  </footer>
</main>

<div class="browser">
  <header class="iechrome">
    <div class="ietitle">
      <svg width="11" height="3"><path stroke="#222" stroke-width="2" d="M0 1h11"/></svg>
      <svg width="11" height="14"><path fill="none" stroke="#222" stroke-width="1.300" d="M1 4h6v9H1zM4 4V1h6v9H7"/></svg>
      <svg width="12" height="14"><path stroke="#222" d="M1 1l10 12M11 1L1 13"/></svg>
    </div>
    <div class="ieaddr">
      <div class="navbtn back"><svg width="22" height="18"><path fill="#fde9ad" stroke="#b38a1b" d="M10 1L1 9l9 8v-5h11V6H10z"/></svg></div>
      <div class="navbtn fwd"><svg width="16" height="14"><path fill="#fde9ad" stroke="#b38a1b" d="M8 1l7 6-7 6V9H1V5h7z"/></svg></div>
      <div class="addr">
        <svg width="16" height="20"><use href="#page"/></svg>
        <span class="url"><b>https</b>://ipowerph.eps.ad.<b>pwcinternal.com</b>/#/modules/legacy/open?url=gui%2Fiportfolio%2Fdefault.aspx</span>
        <svg class="adn" width="7" height="5"><path fill="#7d6b32" d="M0 0h7L3.500 5z"/></svg>
        <svg width="10" height="13"><path fill="#7d6b32" d="M0 6h10v7H0z"/><path fill="none" stroke="#7d6b32" stroke-width="1.500" d="M2 6V3.500a3 3 0 0 1 6 0V6"/></svg>
        <svg width="11" height="14"><path fill="none" stroke="#7d6b32" stroke-width="1.500" d="M7 3.500a4.500 4.500 0 1 1-3 0"/><path fill="#7d6b32" d="M8 0v5H5z"/></svg>
      </div>
      <div class="search"><span>Search...</span><svg width="13" height="16"><circle cx="8" cy="6" r="4.500" fill="none" stroke="#7d6b32" stroke-width="1.500"/><path stroke="#7d6b32" stroke-width="2" d="M5 10l-4 5"/></svg><svg class="adn" width="7" height="5"><path fill="#7d6b32" d="M0 0h7L3.500 5z"/></svg></div>
      <div class="ietools">
        <svg width="16" height="18"><path fill="#fff" stroke="#7d6b32" d="M8 1L1 8h2v9h4v-6h2v6h4V8h2z"/></svg>
        <svg width="17" height="16"><path fill="#fff" stroke="#7d6b32" d="M8.500 1l2.200 5h5.300l-4.300 3.500 1.600 5.500-4.800-3.200L3.700 15l1.600-5.500L1 6h5.300z"/></svg>
        <svg width="16" height="16"><circle cx="8" cy="8" r="5" fill="none" stroke="#fff" stroke-width="3"/><circle cx="8" cy="8" r="6.800" fill="none" stroke="#7d6b32" stroke-dasharray="2.500 2.500"/></svg>
      </div>
    </div>
    <div class="ietabs">
      <div class="ietab"><svg width="16" height="20"><use href="#page"/></svg><span>iPower - Built by PwC, for P...</span><svg width="9" height="10"><path stroke="#888" stroke-width="1.500" d="M1 1l7 8M8 1L1 9"/></svg></div>
      <div class="ienew"><svg width="14" height="18"><path fill="#fff" d="M1 3h9l3 3v12H1z"/><path fill="#e88a0c" d="M10 0h2v2h-2zM12 2h2v2h-2z"/></svg></div>
    </div>
  </header>
  <div class="apphead">
    <span class="burger"><i></i><i></i><i></i></span>
    <svg class="logo" width="38" height="38" viewBox="0 0 38 38"><circle cx="19" cy="19" r="17.800" fill="#fff" stroke="#ef8f00" stroke-width="1.600"/><circle cx="19" cy="13" r="3.600" fill="#ef8f00"/><path fill="none" stroke="#ef8f00" stroke-width="3" d="M3 15c5 1 8 3 8 8v12M35 15c-5 1-8 3-8 8v12M19 17v20"/></svg>
    <span class="brand">iPower</span>
    <span class="user">Jay Armand Ogayon <span>(PH002839)</span><svg width="7" height="5"><path fill="#666" d="M0 0h7L3.500 5z"/></svg></span>
    <span class="bell"><svg width="24" height="28"><path fill="#fff" stroke="#666" d="M1 21c3-2 3-5 3-9 0-5 3-8 7-8s7 3 7 8c0 4 1 7 4 9zM11 4V1"/><path fill="#666" d="M8 24h6l-3 3z"/></svg><em>0</em></span>
  </div>
  <div class="appbody">
    <aside class="side">
      <div class="sitem"><svg width="24" height="30"><path fill="#ddd" d="M1 0h22v13l-1 2c0-5-4-9-10-9S2 10 2 15l-1-2z"/><path fill="#ddd" d="M9 9h6l5 21H4z"/><path stroke="#58585a" stroke-width="2" d="M12 14v4M12 22v5"/></svg></div>
      <div class="sitem"><svg width="34" height="26"><path fill="#ccc" d="M0 4l6-2 10 2 4-1 8 2 6-2v14l-4 1-8 7-4 1-8-6-6-2-4-1z"/><path stroke="#58585a" d="M12 8l8 8M9 11l8 8M15 6l8 8"/></svg></div>
      <div class="sitem"><svg width="30" height="28"><g fill="#ccc"><ellipse cx="6" cy="12" rx="3.500" ry="5"/><ellipse cx="12" cy="6" rx="3.500" ry="5"/><ellipse cx="20" cy="6" rx="3.500" ry="5"/><ellipse cx="26" cy="12" rx="3.500" ry="5"/><path d="M16 12c5 0 9 6 8 10s-5 2-8 2-7 3-8-2 3-10 8-10z"/></g></svg></div>
      <div class="sitem"><svg width="34" height="30"><g fill="none" stroke="#ccc"><circle cx="13" cy="14" r="6" stroke-width="4"/><circle cx="13" cy="14" r="10" stroke-width="3" stroke-dasharray="3.500 3.500"/><circle cx="27" cy="8" r="3" stroke-width="2"/><circle cx="27" cy="8" r="5.500" stroke-width="2" stroke-dasharray="2 2"/></g></svg></div>
      <div class="sitem"><svg width="30" height="28"><path fill="none" stroke="#ccc" stroke-width="2" d="M2 3h11l14 14-10 10L2 13zM6 3l14-1 9 11"/><circle cx="7" cy="8" r="2" fill="#ccc"/></svg></div>
      <div class="sitem"><svg width="30" height="24"><path fill="#ccc" d="M15 0a15 15 0 0 1 15 15c0 4-1 7-3 9l-5-4H8l-5 4c-2-2-3-5-3-9A15 15 0 0 1 15 0z"/><path fill="#58585a" d="M15 3a12 12 0 0 1 12 12H3A12 12 0 0 1 15 3z"/><path stroke="#ccc" d="M15 15l3-7"/><circle cx="15" cy="16" r="3" fill="none" stroke="#ccc"/></svg></div>
      <div class="sitem"><span class="qcirc">?</span></div>
    </aside>
    <div class="appmain">
      <div class="ptabs">
        <div class="ptab on"><svg width="20" height="20"><circle cx="10" cy="10" r="10" fill="#555"/><path fill="none" stroke="#fff" d="M10 4v8H5"/></svg><span>Portfolio</span><svg class="pin" width="17" height="20"><path fill="#888" d="M9 0l8 6-3 2-3 6-6-6 6-3zM6 10l-6 10 8-7z"/></svg><svg class="xx" width="10" height="11"><path stroke="#777" d="M1 1l8 9M9 1l-8 9"/></svg></div>
        <div class="ptab off"><svg width="20" height="20"><circle cx="10" cy="10" r="9.500" fill="#e4e4e4" stroke="#aaa"/><path fill="none" stroke="#aaa" d="M10 4v8H5"/></svg><span>Time</span><svg class="pin" width="11" height="20"><path fill="#111" d="M2 0h7v2L8 9l3 3H0l3-3-1-7zM5 12h1v8H5z"/></svg><svg class="xx" width="10" height="11"><path stroke="#777" d="M1 1l8 9M9 1l-8 9"/></svg></div>
      </div>
      <div class="cols">
        <section class="box">
          <h4>My portfolio</h4>
          <ul class="links">
            <li><a>My portfolio view</a></li><li><a>Create Bill</a></li><li><a>Open Bill</a></li><li><a>Create Adjustment Note</a></li><li><a class="dim">Approve Bill</a></li><li><a>Debtor Management</a></li>
          </ul>
        </section>
        <section class="box">
          <h4>My enquiries</h4>
          <ul class="links">
            <li><a>My bill analysis view</a></li><li><a>Accounts Receivable</a></li><li><a>Cash allocation enquiry</a></li><li><a>Bill History</a></li><li><a>Unpaid Bills</a></li><li><a>WIP Provisioning</a></li><li><a>Bill Audit</a></li><li><a class="dim">VAT Exception</a></li><li><a>VAT Category Summary</a></li><li><a>Reallocate Partner/Manager/Bills/OU/Product/Industry...</a></li>
          </ul>
        </section>
      </div>
      <section class="bills">
        <div class="billhead"><span>My unprocessed bills:</span><svg width="13" height="13"><path fill="none" stroke="#fff" stroke-width="2" d="M2 6c0-3 2-5 5-5 2 0 3 1 4 2M11 7c0 3-2 5-5 5-2 0-3-1-4-2"/><path fill="#fff" d="M9 4h4V0zM4 9H0v4z"/></svg></div>
        <div class="billwrap">
          <table class="billt">
            <thead><tr><th>Debtor Name<th>Bill No.<th>Bill Entity Code<th class="ctr">Bill Date<th>BS<th>BT<th>Adj Note<th class="num">Total Net Bill Amt</thead>
            <tbody>
              <tr><td>Andorra Investments Corporation<td>MNL99004327<td>PH010<td class="ctr">5/10/2019<td>N<td>F<td><td class="rt">164,111.00
              <tr><td>Avon Products Mfg., Inc.<td>MNL99004328<td>PH010<td class="ctr">5/10/2019<td>N<td>F<td><td class="rt">83,247.70
              <tr><td>Best Selection Retail Corporation<td>MNL99004341<td>PH010<td class="ctr">5/10/2019<td>N<td>F<td><td class="rt">16,525.57
              <tr><td>Duddell Holdings Corporation<td>MNL99004389<td>PH010<td class="ctr">5/10/2019<td>N<td>F<td><td class="rt">28,671.00
              <tr><td>Dyna-Mac Keppel Philippines, Inc.<td>MNL99004390<td>PH010<td class="ctr">5/10/2019<td>N<td>F<td><td class="rt">(89,045.60)
              <tr><td>Franklin Baker Company Employees...<td>MNL99004387<td>PH010<td class="ctr">5/10/2019<td>N<td>F<td><td class="rt">565,666.00
              <tr><td>Kapatiran Realty Corporation<td>MNL99004261<td>PH010<td class="ctr">5/9/2019<td>N<td>F<td><td class="rt">184,570.96
            </tbody>
          </table>
          <div class="billscroll"><svg width="13" height="9"><path fill="none" stroke="#666" stroke-width="2" d="M1 8l5.500-6L12 8"/></svg><span></span><svg width="13" height="9"><path fill="none" stroke="#666" stroke-width="2" d="M1 1l5.500 6L12 1"/></svg></div>
        </div>
      </section>
      <div class="cols cols2">
        <section class="box">
          <h4 class="thin"><svg width="8" height="13"><ellipse cx="4" cy="6.500" rx="4" ry="6.500" fill="#444"/><path stroke="#fff" d="M4 3v1M4 5.500V10"/></svg> Help</h4>
          <ul class="links"><li><a>Knowledge Base</a></li><li><a>About Portfolio</a></li></ul>
        </section>
        <section class="box">
          <h4 class="thin">eLearning</h4>
          <ul class="links"><li><a>Portfolio Management</a></li><li><a>Portfolio Billing</a></li><li><a>Portfolio Enquiry</a></li></ul>
        </section>
      </div>
    </div>
  </div>
  <footer class="hbar">
    <span class="hitem"><svg width="18" height="22"><use href="#win"/></svg></span>
    <span class="hitem"><svg width="22" height="26"><use href="#find"/></svg></span>
    <span class="hitem"><svg width="28" height="30"><use href="#snip"/></svg></span>
    <span class="hitem on"><svg width="24" height="28"><use href="#folder"/></svg></span>
    <span class="hitem"><span class="ui">Ui</span></span>
    <span class="hitem on active"><svg width="28" height="30"><use href="#ie"/></svg></span>
    <span class="hitem on"><svg width="26" height="26"><use href="#xl"/></svg></span>
    <span class="hitem"><svg width="26" height="30"><use href="#pad"/></svg></span>
    <span class="hitem"><svg width="26" height="28"><use href="#wa"/></svg></span>
    <span class="hitem on"><svg width="24" height="28"><use href="#sticky"/></svg></span>
    <span class="hitem on"><span class="ui">Ui</span></span>
    <span class="hitem on"><svg width="28" height="30"><use href="#chrome"/></svg></span>
    <span class="hitem on"><svg width="26" height="26"><use href="#word"/></svg></span>
    <span class="hitem on"><span class="ui ui-w">Ui</span></span>
    <span class="hclock">3:30 PM<br>5/12/2019</span>
  </footer>
</div>
</body>
</html>
```
FILE: styles.css
```css
*{box-sizing:border-box}
html,body{margin:0;padding:0}
body{width:3840px;height:1080px;overflow:hidden;display:flex;background:#fff;font-family:"Open Sans","Liberation Sans",sans-serif;font-size:12px;color:#444}
svg{display:block;flex:none}
.sprite{position:absolute}
p,h2,h3,h4,ul{margin:0;padding:0}
ul{list-style:none}
em{font-style:normal}

/* vertical taskbar */
.vbar{width:62px;flex:none;height:1080px;background:#665626;display:flex;flex-direction:column;color:#fff}
.vitem{display:flex;align-items:center;justify-content:center;flex:none}
.v-win{height:40px}
.v-find{height:43px}
.v-slot{height:47px}
.v-slot.on{background:linear-gradient(#fff2b8,#fff2b8) left center/2px 38px no-repeat}
.v-slot.active{background-color:#9a7f26;background-size:2px 100%}
.v-slot.hover{background-color:#74643b;background-size:2px 100%}
.ui{display:flex;align-items:center;justify-content:center;width:23px;height:24px;background:#0a74c4;color:#fff;font:15px "Open Sans",sans-serif}
.ui-w{box-shadow:inset 0 0 0 2px #fff}
.vspace{flex:1}
.vchev{padding-left:41px;margin-bottom:14px}
.vtray{display:flex;gap:9px;padding-left:12px;margin-bottom:11px;align-items:center}
.vvol{padding-left:13px;margin-bottom:16px}
.vclock{text-align:center;font-size:12px;line-height:17px;margin-bottom:14px}
.vnote{position:relative;height:34px;padding-left:23px;margin-bottom:8px}
.vbadge{position:absolute;left:30px;top:11px;width:17px;height:17px;border-radius:50%;background:#8a7424;border:1px solid #d8c88a;color:#fff;font-size:11px;line-height:15px;text-align:center}

/* excel */
.excel{width:1858px;flex:none;height:1080px;display:flex;flex-direction:column;background:#e6e6e6}
.xtitle{height:35px;background:#217346;display:grid;grid-template-columns:1fr auto 1fr;align-items:center;color:#d7e8de}
.qat{display:flex;align-items:center;gap:3px;padding-left:21px}
.qat svg:nth-child(2),.qat svg:nth-child(4),.qat svg:nth-child(6){margin-left:12px}
.xname{font-size:12px;padding-bottom:2px}
.xwin{display:flex;justify-content:flex-end;gap:34px;padding-right:16px;align-items:center}
.xtabs{height:24px;background:#217346;display:flex;align-items:flex-end;color:#fff;padding-right:16px}
.xt{padding:0 14.500px;height:24px;line-height:23px;font-size:11.500px;white-space:nowrap}
.xt.first{margin-left:6px}
.xt.home{background:#f1f1f1;color:#217346;padding:0;text-align:center;width:60px;margin-left:9px}
.xtell{display:flex;align-items:center;gap:7px;height:24px;margin-left:14px;color:#e5f0ea;flex:1;font-size:11.500px}
.xsign{line-height:23px;margin-right:11px;height:24px;font-size:11.500px}
.xshare{display:flex;align-items:center;gap:4px;background:#1d5c3a;height:23px;width:62px;padding-left:6px;font-size:11.500px}

.ribbon{height:93px;flex:none;background:#f1f1f1;display:flex;border-bottom:2px solid #d4d4d4;padding-top:4px}
.grp{display:flex;flex-direction:column;border-right:1px solid #d0d0d0;height:84px;flex:none}
.gb{flex:1;min-height:0}
.gl{height:15px;line-height:14px;text-align:center;color:#777;position:relative;font-size:12px}
.lau{position:absolute;right:4px;top:4px}
.g-clip{width:158px}
.g-font{width:206px}
.g-align{width:264px}
.g-num{width:140px}
.g-styles{width:690px}
.g-cells{width:136px}
.g-edit{width:187px}
.rcollapse{flex:1;display:flex;justify-content:flex-end;align-items:flex-end;padding:0 10px 6px 0}
.clip{display:flex}
.paste{width:50px;padding:5px 0 0 13px;display:flex;flex-direction:column;align-items:flex-start}
.paste span{margin-top:3px;line-height:16px}
.pdn{margin:10px 0 0 9px}
.clipcol{display:flex;flex-direction:column}
.cr{height:23px;display:flex;align-items:center;gap:3px;white-space:nowrap}
.cr span{margin-left:2px}
.ml8{margin-left:6px}
.fr1{display:flex;align-items:center;padding:7px 0 0 4px}
.combo{background:#fff;border:1px solid #c6c6c6;height:22px;display:flex;align-items:center;justify-content:space-between;padding:0 5px 0 3px}
.c-font{width:112px;font-size:13px}
.c-size{width:41px;margin-left:-1px;font-size:13px}
.bigA,.smA{display:flex;align-items:flex-start;margin-left:7px;color:#555;font-size:14px}
.smA{font-size:12px;margin-left:9px}
.fr2{display:flex;align-items:center;padding:11px 0 0 10px;height:36px}
.fb,.fi,.fu{font-size:13px;width:16px;text-align:center;margin-right:6px}
.fu{margin-right:3px}
.m1{margin-left:3px}
.sep{width:1px;height:22px;background:#d0d0d0;margin:0 10px}
.swatch{display:flex;flex-direction:column;align-items:center;width:16px}
.swatch em{display:block;width:16px;height:4px}
.sw-y{background:#ffff00}
.sw-r{background:#ff0000}
.sw2{margin-left:8px}
.swA{font-size:13px;line-height:13px;color:#444}
.ar{display:flex;align-items:center;height:24px;padding-left:4px}
.ar1{margin-top:7px;margin-bottom:8px}
.ab{width:22px;height:23px;display:flex;align-items:center;justify-content:center}
.ab.top{align-items:flex-start;padding-top:2px}
.ab.sel{background:#c6c6c6;align-items:flex-end;padding-bottom:1px}
.vs{width:1px;height:22px;background:#d0d0d0;margin:0 7px}
.ori{margin-left:3px}
.vs2{margin-left:8px;margin-right:6px}
.vs3{margin-left:3px;margin-right:6px}
.ind{margin-left:2px}
.ind2{margin-left:6px}
.wr{margin-right:3px;margin-left:2px}
.tx{white-space:nowrap;font-size:12.500px;margin-left:2px}
.ml12{margin-left:10px}
.c-gen{width:131px;margin:7px 0 0 4px;font-size:13px}
.nr{display:flex;align-items:center;padding:11px 0 0 13px;gap:6px}
.dol,.pct{font-size:15px}
.pct{margin-left:5px;font-size:14px}
.com{font-size:14px;font-weight:700;width:10px;text-align:center;margin-left:2px}
.nr .vs{margin:0 0 0 2px}
.dec{display:flex;flex-direction:column;font-size:9px;line-height:10px;margin-left:2px}
.dec small{font-size:9px;color:#555}
.stylesb{display:flex;padding:2px 0 0 7px}
.big{display:flex;flex-direction:column;align-items:center;line-height:16px;white-space:nowrap}
.big span{display:flex;align-items:center;gap:2px}
.big svg{margin-bottom:1px}
.big span svg{margin:0}
.bcf{width:68px}
.bft{width:60px;margin-left:2px}
.gal{margin-left:-3px;height:63px;width:548px;display:flex;background:#fff;border:1px solid #c6c6c6;border-width:1px 0 1px 1px}
.galgrid{width:532px;display:grid;grid-template-columns:repeat(5,100px);grid-auto-rows:22px;gap:5px 6px;padding:5px 0 0 3px;border-right:1px solid #c6c6c6}
.st{display:flex;align-items:center;padding-left:4px;font-family:Lato,sans-serif;font-size:13.500px;white-space:nowrap}
.st-n{background:#fff;color:#222;box-shadow:0 0 0 3px #c6c6c6}
.st-b{background:#ffc7ce;color:#9c0006}
.st-g{background:#c6efce;color:#006100}
.st-u{background:#ffeb9c;color:#9c5700}
.st-c{background:#f2f2f2;color:#fa7d00;border:1px solid #7f7f7f;font-weight:700}
.st-k{background:#a5a5a5;color:#fff;font-weight:700;border:3px double #3f3f3f}
.st-e{color:#7f7f7f;font-style:italic}
.st-i{background:#ffcc99;color:#3f3f76;border:1px solid #7f7f7f}
.st-l{color:#fa7d00;border-bottom:3px double #ff8001}
.st-o{background:#ffffcc;color:#222;border:1px solid #b2b2b2}
.galbtns{width:15px;display:flex;flex-direction:column;background:#f1f1f1}
.galbtns span{flex:1;display:flex;align-items:center;justify-content:center;border:1px solid #c6c6c6;border-width:0 1px 1px 0}
.cellsb{display:flex;padding:2px 0 0 8px}
.cb{width:42px;display:flex;flex-direction:column;align-items:center;line-height:18px}
.cb span{margin-top:3px}
.cb svg:last-child{margin-top:8px}
.editb{display:flex;padding-left:9px}
.edcol{width:91px;padding-top:1px}
.er{height:23px;display:flex;align-items:center;gap:3px;white-space:nowrap}
.sig{font-size:23px;line-height:22px;width:14px;color:#555}
.ml5{margin-left:5px}
.ml2{margin-left:0}
.bsort{width:40px;padding-top:2px}
.bfind{width:41px;margin-left:4px;padding-top:2px}
.az{font:700 15px "Open Sans",sans-serif}
.az1{fill:#2b6cb0}
.az2{fill:#7a4fa3}

.fbar{height:46px;flex:none;display:flex;align-items:flex-start;padding:10px 5px 0 5px;background:#e6e6e6}
.namebox,.fxbox,.finput{height:25px;background:#fff;border:1px solid #c6c6c6;display:flex;align-items:center}
.namebox{width:102px;justify-content:space-between;padding:0 5px 0 6px;font-size:13px}
.dots{width:2px;height:14px;margin:6px 14px 0 15px;background:repeating-linear-gradient(#aaa 0 2px,transparent 2px 5px)}
.fxbox{width:108px;gap:22px;padding-left:12px}
.fx{font:italic 700 14px "Liberation Serif",serif;color:#555}
.finput{flex:1;margin-left:5px;justify-content:flex-end;padding-right:6px}

.xbody{flex:1;min-height:0;display:flex}
.recover{width:244px;flex:none;padding:0 13px 0 14px;display:flex;flex-direction:column;border-right:1px solid #d0d0d0}
.recover h2{font:300 21px "Open Sans",sans-serif;color:#217346;margin-top:14px;line-height:28px;white-space:nowrap;letter-spacing:-.3px}
.recover p{font-size:11px;line-height:13px;margin-top:6px;color:#444;white-space:nowrap}
.recover h3{font-size:12px;font-weight:600;color:#555;margin-top:14px;line-height:16px;padding-bottom:1px;border-bottom:1px solid #bbb;margin-right:1px}
.files{height:634px;margin:4px 0 0 9px;background:#fff;border:2px solid #c6c6c6;padding:4px 0 0 10px;font-size:11.500px;color:#222}
.file{display:flex;gap:10px;line-height:15px;height:70px;white-space:nowrap;padding-top:3px}
.which{display:flex;align-items:center;gap:5px;margin-top:55px;color:#3f7cbf;font-size:11.500px;white-space:nowrap}
.qm{font:700 13px "Open Sans",sans-serif;fill:#fff;text-anchor:middle}
.closewrap{display:flex;justify-content:flex-end;margin-top:7px}
.closebtn{width:46px;height:23px;background:#fff;border:1px solid #ababab;text-align:center;line-height:21px;color:#444}

.sheetcol{flex:1;min-width:0;display:flex;flex-direction:column}
.sheetmain{height:831px;flex:none;display:flex;background:#fff;border-bottom:2px solid #a0a0a0;overflow:hidden}
.gridwrap{width:1593px;flex:none;overflow:hidden}
.grid{table-layout:fixed;width:1593px;border-collapse:separate;border-spacing:0;font:11px Lato,sans-serif;color:#111}
.c-rh{width:23px}.c-g{width:152px}.c-h,.c-i,.c-j,.c-w{width:54px}.c-k{width:128px}.c-l,.c-m{width:121px}.c-n{width:95px}.c-o{width:114px}.c-p{width:68px}.c-q{width:100px}.c-r{width:63px}.c-s{width:105px}.c-t{width:131px}.c-u{width:75px}.c-v{width:46px}.c-x{width:35px}
.grid tr{height:17px}
.grid td{padding:0 2px 0 3px;border-right:1px solid #d4d4d4;border-bottom:1px solid #d4d4d4;white-space:nowrap;overflow:hidden;height:17px;line-height:16px}
.grid tbody th{background:#e6e6e6;border-right:2px solid #a8a8a8;border-bottom:1px solid #c6c6c6;font-weight:400;color:#222;text-align:center;padding:0;height:17px;line-height:16px;font-size:11.500px}
.grid .colh{height:15px}
.grid .colh th{background:#e6e6e6;border-right:1px solid #bdbdbd;border-bottom:2px solid #a0a0a0;font-weight:400;height:15px;line-height:13px;padding:0;color:#222}
.corner{vertical-align:bottom}
.corner svg{margin:0 2px 1px auto}
.r1 td{height:16px}
.r1{height:16px}
.grid td.h{font-weight:700;padding-left:2px}
.grid td.n{text-align:right}
.grid td.d{text-align:right;padding-right:19px}
.grid td.bn{padding-left:20px}
.tri{background:linear-gradient(135deg,#107c10 0 4px,transparent 4px)}
.vscroll{flex:1;display:flex;flex-direction:column;padding:2px 3px 0 3px;background:#dadada;border-left:1px solid #c0c0c0}
.sbtn{height:14px;background:#fff;border:1px solid #ababab;display:flex;align-items:center;justify-content:center}
.sthumb{height:781px;background:#fff;border:1px solid #ababab;margin-top:2px;margin-bottom:19px}
.sheettabs{flex:1;display:flex;align-items:flex-start;background:#e6e6e6;min-height:0}
.tnav{display:flex;gap:23px;width:101px;padding:12px 0 0 28px}
.stab{height:26px;line-height:24px;padding:0 13px;border-left:1px solid #999;font-size:12.500px;color:#444;white-space:nowrap}
.stab.active{background:#fff;border-right:1px solid #999;color:#217346;font-weight:700;border-bottom:2px solid #217346;margin-top:-1px;line-height:25px}
.stab.last{border-left:0;border-right:1px solid #999;padding:0 15px 0 14px}
.addsheet{margin:5px 0 0 34px}
.hdots{width:3px;height:14px;margin:8px 0 0 497px;background:repeating-linear-gradient(#aaa 0 2px,transparent 2px 5px)}
.hscroll{width:607px;height:16px;margin:6px 0 0 15px;display:flex;background:#d9d9d9}
.hb{width:15px;height:16px;background:#fff;border:1px solid #ababab;display:flex;align-items:center;justify-content:center}
.hspace1{width:139px}
.hthumb{width:161px;background:#fff;border:1px solid #ababab}
.hspace2{flex:1}
.xstatus{height:23px;flex:none;display:flex;align-items:center;background:#f1f1f1;border-top:1px solid #c6c6c6;border-bottom:2px solid #a0a0a0;padding-left:7px;color:#555}
.ready{margin-right:20px}
.zoomarea{margin-left:auto;display:flex;align-items:center;height:100%;padding-right:8px}
.vbtn{width:38px;height:21px;display:flex;align-items:center;justify-content:center}
.vbtn.sel{background:#c6c6c6}
.zm{margin-left:3px}
.slider{display:block;width:101px;height:1px;background:#999;margin-left:5px;position:relative}
.slider em{position:absolute;left:41px;top:-5px;width:3px;height:11px;background:#555}
.zp{margin-left:4px}
.pctz{margin-left:13px;font-size:12px;color:#555}

/* browser */
.browser{width:1920px;flex:none;height:1080px;display:flex;flex-direction:column}
.iechrome{height:78px;flex:none;background:linear-gradient(#fac421 0 56px,#ecc24f 78px);display:flex;flex-direction:column}
.ietitle{height:27px;display:flex;justify-content:flex-end;align-items:center;gap:34px;padding-right:20px}
.ieaddr{height:25px;display:flex;align-items:center}
.navbtn{border-radius:50%;border:1px solid #b38a1b;display:flex;align-items:center;justify-content:center;flex:none}
.back{width:36px;height:36px;margin-left:2px}
.fwd{width:26px;height:26px;margin-left:4px;margin-right:4px}
.addr,.search{height:25px;background:#fde9ad;border:1px solid #b38a1b;display:flex;align-items:center;color:#222}
.addr{width:1278px;padding:0 4px 0 3px;gap:6px}
.url{flex:1;color:#7d7d6d;white-space:nowrap;font-size:12px}
.url b{color:#111;font-weight:400}
.adn{margin-left:-2px}
.search{width:478px;margin-left:6px;padding:0 8px 0 7px;gap:6px}
.search span{flex:1}
.ietools{display:flex;gap:8px;margin-left:17px}
.ietabs{height:26px;display:flex;padding:2px 0 0 1px}
.ietab{width:199px;height:24px;background:#fff;display:flex;align-items:center;gap:4px;padding-left:4px;color:#222;font-size:12px;white-space:nowrap}
.ietab span{flex:none;width:158px}
.ienew{width:22px;height:24px;background:#d6b970;border:1px solid #a89049;display:flex;align-items:center;justify-content:center}
.apphead{height:50px;flex:none;display:flex;align-items:center;background:#fff}
.burger{width:30px;height:30px;background:#ef8f00;margin-left:16px;border-radius:1px;display:flex;flex-direction:column;justify-content:center;gap:3px;padding:0 7px}
.burger i{display:block;height:3px;background:#fff}
.logo{margin-left:22px}
.brand{font:italic 700 29px "Liberation Serif",serif;color:#555;margin-left:7px;letter-spacing:-.8px}
.user{margin-left:auto;font:11.500px "DejaVu Sans",sans-serif;color:#444;display:flex;align-items:center;gap:3px;letter-spacing:-.2px;white-space:pre}
.user span{color:#666}
.bell{position:relative;margin:0 32px 0 17px;width:24px}
.bell em{position:absolute;left:13px;top:1px;width:16px;height:16px;border-radius:50%;background:#ef8f00;color:#fff;font:700 9px/16px "DejaVu Sans",sans-serif;text-align:center}
.appbody{flex:1;min-height:0;display:flex}
.side{width:60px;flex:none;background:#58585a;display:flex;flex-direction:column}
.sitem{height:62px;display:flex;align-items:center;justify-content:center;flex:none}
.qcirc{width:26px;height:30px;border-radius:50%;background:#bbb;color:#58585a;display:flex;align-items:center;justify-content:center;font:700 14px "DejaVu Sans",sans-serif}
.appmain{flex:1;min-width:0;background:#fff;display:flex;flex-direction:column}
.ptabs{height:40px;flex:none;background:#f7f7f7;display:flex;align-items:flex-end;padding-left:5px;gap:5px}
.ptab{width:185px;height:34px;display:flex;align-items:center;padding-left:10px;border-radius:3px 3px 0 0;gap:6px;font:11.500px "DejaVu Sans",sans-serif}
.ptab.on{background:#fff;color:#444}
.ptab.off{background:#e4e4e4;color:#aaa}
.ptab span{flex:1}
.pin{margin-top:4px}
.xx{margin:-18px 3px 0 0}
.cols{display:grid;grid-template-columns:910px 910px;gap:20px;padding:0 0 0 10px;height:269px;flex:none}
.box h4{font:700 12.500px "DejaVu Sans",sans-serif;color:#444;height:41px;padding-top:19px;line-height:14px;border-bottom:2px solid #999;letter-spacing:-.3px}
.box h4.thin{font-weight:400;font-size:14px;display:flex;align-items:center;gap:3px;padding-top:0;height:16px;line-height:14px}
.links li{height:20.600px;display:flex;align-items:center;padding-left:3px;gap:6px}
.links li::before{content:"";width:10px;height:10px;border-radius:50%;background:radial-gradient(circle at 40% 30%,#d86a6a,#8f1c20 70%);flex:none}
.links a{font:11.500px "DejaVu Sans",sans-serif;color:#111;text-decoration:underline;letter-spacing:-.25px;white-space:nowrap}
.links a.dim{color:#888}
.bills{width:1832px;margin-left:5px;flex:none}
.billhead{height:25px;background:#62241f;color:#fff;display:flex;align-items:center;justify-content:space-between;padding:0 7px 0 5px;font:700 11.500px "DejaVu Sans",sans-serif;letter-spacing:-.3px}
.billwrap{display:flex}
.billt{width:1815px;table-layout:fixed;border-collapse:separate;border-spacing:0;font:11px "DejaVu Sans",sans-serif;color:#333;letter-spacing:-.2px}
.billt th{background:#e8e6d8;height:25px;font-weight:400;text-align:left;padding:2px 0 0 6px;border-top:2px solid #e8e6d8;border-right:2px solid #cfcdbc;border-bottom:3px solid #c5c3b0;white-space:nowrap}
.billt td{height:25px;padding:0 0 0 5px;background:#fcfcfc;border-bottom:2px solid #e0d9c5;white-space:nowrap;overflow:hidden}
.billt .ctr{text-align:center}
.billt .num{text-align:right;padding-right:21px}
.billt .rt{text-align:right;padding-right:5px}
.billt th:last-child{border-right:0}
.billscroll{flex:1;margin-top:25px;background:#f0f0f0;display:flex;flex-direction:column;align-items:center;padding-top:18px}
.billscroll span{width:100%;height:24px;background:#cdcdcd;margin:7px 0 87px}
.cols2{height:auto;margin-top:30px;grid-template-columns:944px 896px;gap:0}
.hbar{height:40px;flex:none;background:#665626;display:flex;align-items:stretch;color:#fff}
.hitem{width:49px;display:flex;align-items:center;justify-content:center;flex:none}
.hitem.on{background:linear-gradient(#fff2b8,#fff2b8) center bottom/41px 2px no-repeat}
.hitem.active{background-color:#9a7f26;background-size:100% 2px}
.hclock{margin-left:auto;text-align:center;padding:2px 5px 0 0;line-height:18px;font-size:12px;white-space:nowrap}
```
